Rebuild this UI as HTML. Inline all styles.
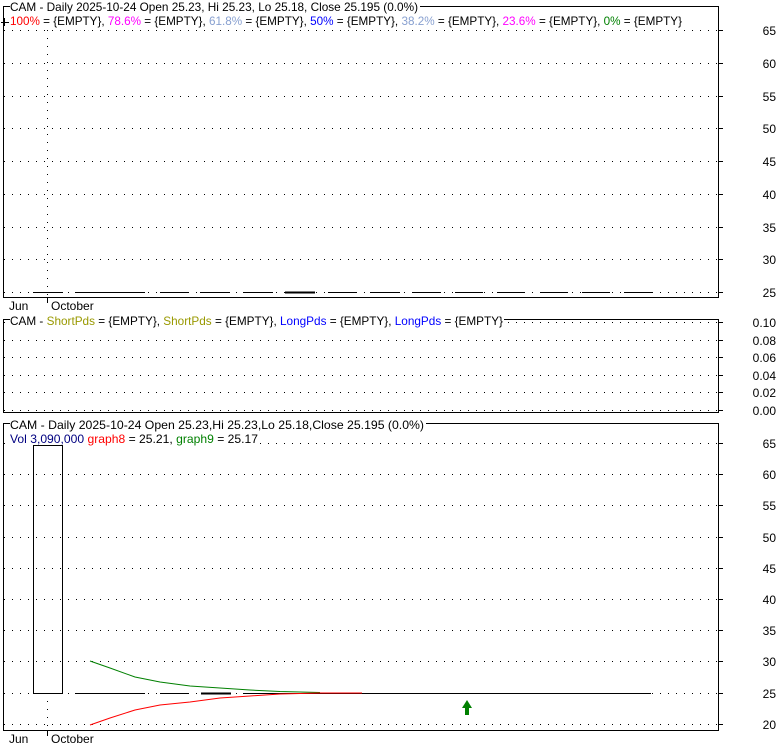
<!DOCTYPE html>
<html><head><meta charset="utf-8"><style>
html,body{margin:0;padding:0;background:#fff;}
svg{display:block;font-family:"Liberation Sans",Arial,sans-serif;font-size:12px;}
</style></head><body>
<svg width="780" height="745" viewBox="0 0 780 745" xmlns="http://www.w3.org/2000/svg">
<g fill="none" stroke="#000" stroke-width="1" stroke-dasharray="1 7" shape-rendering="crispEdges">
<line x1="4" y1="30.5" x2="719" y2="30.5"/><line x1="4" y1="63.5" x2="719" y2="63.5"/><line x1="4" y1="96.5" x2="719" y2="96.5"/><line x1="4" y1="128.5" x2="719" y2="128.5"/><line x1="4" y1="161.5" x2="719" y2="161.5"/><line x1="4" y1="194.5" x2="719" y2="194.5"/><line x1="4" y1="227.5" x2="719" y2="227.5"/><line x1="4" y1="259.5" x2="719" y2="259.5"/><line x1="4" y1="292.5" x2="719" y2="292.5"/>
<line x1="47.5" y1="30" x2="47.5" y2="298"/>
<line x1="4" y1="322.5" x2="719" y2="322.5"/><line x1="4" y1="340.5" x2="719" y2="340.5"/><line x1="4" y1="357.5" x2="719" y2="357.5"/><line x1="4" y1="375.5" x2="719" y2="375.5"/><line x1="4" y1="392.5" x2="719" y2="392.5"/><line x1="4" y1="410.5" x2="719" y2="410.5"/>
<line x1="4" y1="443.5" x2="719" y2="443.5"/><line x1="4" y1="474.5" x2="719" y2="474.5"/><line x1="4" y1="505.5" x2="719" y2="505.5"/><line x1="4" y1="537.5" x2="719" y2="537.5"/><line x1="4" y1="568.5" x2="719" y2="568.5"/><line x1="4" y1="599.5" x2="719" y2="599.5"/><line x1="4" y1="630.5" x2="719" y2="630.5"/><line x1="4" y1="661.5" x2="719" y2="661.5"/><line x1="4" y1="693.5" x2="719" y2="693.5"/><line x1="4" y1="724.5" x2="719" y2="724.5"/>
<line x1="47.5" y1="693" x2="47.5" y2="731"/>
</g>
<rect x="8" y="433" width="252" height="12" fill="#fff"/>
<rect x="8" y="14" width="678" height="13" fill="#fff"/>
<g fill="none" stroke="#000" stroke-width="1" shape-rendering="crispEdges">
<rect x="3.5" y="6.5" width="715" height="291"/>
<rect x="3.5" y="319.5" width="715" height="93"/>
<rect x="3.5" y="423.5" width="715" height="307"/>
<path d="M719 30.5h4M719 63.5h4M719 96.5h4M719 128.5h4M719 161.5h4M719 194.5h4M719 227.5h4M719 259.5h4M719 292.5h4"/>
<path d="M719 322.5h4M719 340.5h4M719 357.5h4M719 375.5h4M719 392.5h4M719 410.5h4"/>
<path d="M719 443.5h4M719 474.5h4M719 505.5h4M719 537.5h4M719 568.5h4M719 599.5h4M719 630.5h4M719 661.5h4M719 693.5h4M719 724.5h4"/>
<path d="M47.5 298v5M47.5 731v5"/>
<path d="M1 22.5h8M4.5 18v8"/>
<path d="M33 292.5h30M75 292.5h70M160 292.5h28M200 292.5h30M243 292.5h30M328 292.5h28M370 292.5h30M413 292.5h28M455 292.5h28M497 292.5h28M540 292.5h28M582 292.5h28M624 292.5h28"/>
<path d="M285 292.5h30" stroke-width="2"/>
<rect x="33.5" y="445.5" width="29" height="248"/>
<path d="M75 693.5h70M160 693.5h28M243 693.5h320"/>
<path d="M201 693.5h30" stroke-width="2"/>
<path d="M360 693.5h291"/>
</g>
<polyline fill="none" stroke="#008000" points="90,661 110,668 135,677 160,682 190,686 220,688 250,690 280,691.5 320,692.5"/>
<polyline fill="none" stroke="#ff0000" points="90,725 110,718 135,710 160,705 190,702 220,698 250,696 280,694 320,693 362,693"/>
<path d="M467 700l-5 8h3v7h4v-7h3z" fill="#008000"/>
<g text-anchor="end" fill="#000">
<text x="776" y="35">65</text><text x="776" y="68">60</text><text x="776" y="101">55</text><text x="776" y="133">50</text><text x="776" y="166">45</text><text x="776" y="199">40</text><text x="776" y="232">35</text><text x="776" y="264">30</text><text x="776" y="297">25</text>
<text x="776" y="327">0.10</text><text x="776" y="345">0.08</text><text x="776" y="362">0.06</text><text x="776" y="380">0.04</text><text x="776" y="397">0.02</text><text x="776" y="415">0.00</text>
<text x="776" y="448">65</text><text x="776" y="479">60</text><text x="776" y="510">55</text><text x="776" y="542">50</text><text x="776" y="573">45</text><text x="776" y="604">40</text><text x="776" y="635">35</text><text x="776" y="666">30</text><text x="776" y="698">25</text><text x="776" y="729">20</text>
</g>
<text x="9" y="310">Jun</text><text x="51" y="310">October</text>
<text x="9" y="743">Jun</text><text x="51" y="743">October</text>
<rect x="10" y="0" width="410" height="12" fill="#fff"/>
<text x="10" y="11" textLength="408" lengthAdjust="spacingAndGlyphs">CAM - Daily 2025-10-24 Open 25.23, Hi 25.23, Lo 25.18, Close 25.195 (0.0%)</text>
<text x="10" y="25" textLength="672" lengthAdjust="spacingAndGlyphs"><tspan fill="#ff0000">100%</tspan> = {EMPTY}, <tspan fill="#ff00ff">78.6%</tspan> = {EMPTY}, <tspan fill="#88a0d0">61.8%</tspan> = {EMPTY}, <tspan fill="#0000ff">50%</tspan> = {EMPTY}, <tspan fill="#88a0d0">38.2%</tspan> = {EMPTY}, <tspan fill="#ff00ff">23.6%</tspan> = {EMPTY}, <tspan fill="#008000">0%</tspan> = {EMPTY}</text>
<rect x="10" y="313" width="494" height="12" fill="#fff"/>
<text x="10" y="325" textLength="493" lengthAdjust="spacingAndGlyphs">CAM - <tspan fill="#999900">ShortPds</tspan> = {EMPTY}, <tspan fill="#999900">ShortPds</tspan> = {EMPTY}, <tspan fill="#0000ff">LongPds</tspan> = {EMPTY}, <tspan fill="#0000ff">LongPds</tspan> = {EMPTY}</text>
<rect x="10" y="417" width="416" height="12" fill="#fff"/>
<text x="10" y="429" textLength="414" lengthAdjust="spacingAndGlyphs">CAM - Daily 2025-10-24 Open 25.23,Hi 25.23,Lo 25.18,Close 25.195 (0.0%)</text>
<text x="10" y="443" textLength="248" lengthAdjust="spacingAndGlyphs"><tspan fill="#000080">Vol 3,090,000</tspan> <tspan fill="#ff0000">graph8</tspan> = 25.21, <tspan fill="#008000">graph9</tspan> = 25.17</text>
</svg>
</body></html>
